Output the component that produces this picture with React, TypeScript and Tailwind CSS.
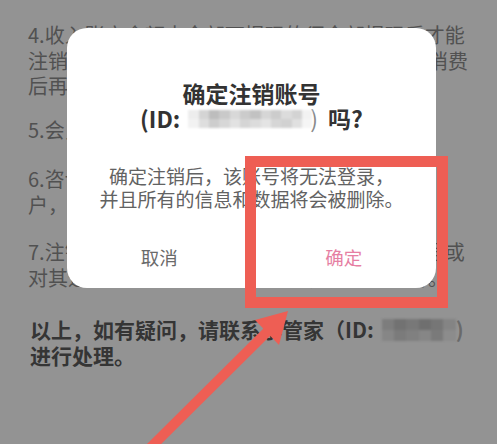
const font = { fontFamily: '"Noto Sans CJK SC", "Noto Sans", sans-serif' };

const titleMosaic = [
  "bg-[#ededed]", "bg-[#d4d4d4]", "bg-[#bdbdbd]", "bg-[#c9c9c9]", "bg-[#d8d8d8]", "bg-[#cbcbcb]",
  "bg-[#c2c2c2]", "bg-[#d6d6d6]", "bg-[#cccccc]", "bg-[#dcdcdc]", "bg-[#d3d3d3]", "bg-[#f2f2f2]",
  "bg-[#f2f2f2]", "bg-[#dedede]", "bg-[#cdcdcd]", "bg-[#d7d7d7]", "bg-[#e2e2e2]", "bg-[#d5d5d5]",
  "bg-[#dcdcdc]", "bg-[#e4e4e4]", "bg-[#d6d6d6]", "bg-[#d1d1d1]", "bg-[#e0e0e0]", "bg-[#f5f5f5]",
];

const idMosaic = [
  "bg-[#7d7d7d]", "bg-[#727272]", "bg-[#787878]", "bg-[#6f6f6f]", "bg-[#767676]", "bg-[#848484]",
  "bg-[#868686]", "bg-[#7b7b7b]", "bg-[#808080]", "bg-[#868686]", "bg-[#7a7a7a]", "bg-[#8c8c8c]",
];

function Mosaic({ cells, cols, className }: { cells: string[]; cols: string; className: string }) {
  return (
    <span className={`inline-grid ${cols} blur-[1px] ${className}`}>
      {cells.map((c, i) => (
        <span key={i} className={c} />
      ))}
    </span>
  );
}

export default function App() {
  return (
    <div className="relative w-[497px] h-[444px] overflow-hidden bg-[#939393]" style={font}>
      {/* page behind the overlay */}
      <div className="pl-[28px] pt-[22px] text-[20px] leading-[25.5px] text-[#515151] whitespace-nowrap">
        <div>
          <p>4.收入账户余额中全部可提现的须全部提现后才能</p>
          <p>注销，若账户内仍有未结算的订单或待处理的消费</p>
          <p>后再申请注销。</p>
        </div>
        <p className="mt-[18px]">5.会员权益将在注销后全部失效。</p>
        <div className="mt-[24px]">
          <p>6.咨询客服时请提供您的账号信息以便核实账</p>
          <p>户，确认无误后即可办理注销。</p>
        </div>
        <div className="mt-[22px]">
          <p>7.注销后，平台将无法为您恢复账户内任何数据或</p>
          <p>对其进行任何形式的找回或补偿，敬请您谅解。</p>
        </div>
        <div className="mt-[27px] text-[21px] font-bold text-[#353535]">
          <p className="flex items-center pl-[2px]">
            以上，如有疑问，请联系小管家（ID:
            <Mosaic cells={idMosaic} cols="grid-cols-6" className="ml-[8px] w-[74px] h-[22px]" />
            <span className="text-[#6a6a6a]">)</span>
          </p>
          <p className="pl-[2px]">进行处理。</p>
        </div>
      </div>

      {/* dialog */}
      <div className="absolute left-[67px] top-[28px] w-[369px] h-[260px] flex flex-col rounded-[20px] bg-white">
        <div className="pt-[53px] text-center text-[23px] leading-[25px] font-bold text-[#333333]">
          <p>确定注销账号</p>
          <p className="flex items-center justify-center">
            <span>(ID:</span>
            <Mosaic cells={titleMosaic} cols="grid-cols-12" className="ml-[8px] w-[124px] h-[18px]" />
            <span className="ml-[-2px] text-[#8a8a8a] font-normal">)</span>
            <span className="ml-[10px]">吗?</span>
          </p>
        </div>
        <div className="mt-[33px] text-center text-[19px] leading-[23px] text-[#626262]">
          <p>确定注销后，该账号将无法登录，</p>
          <p>并且所有的信息和数据将会被删除。</p>
        </div>
        <div className="mt-auto flex h-[60px] text-[18.5px]">
          <button className="flex-1 text-[#6a6a6a]">取消</button>
          <button className="flex-1 text-[#e67fa3]">确定</button>
        </div>
      </div>

      {/* annotation: red frame */}
      <div className="absolute left-[245px] top-[156px] w-[203px] h-[152px] border-[11px] border-[#ee5e54]" />

      {/* annotation: arrow */}
      <svg className="absolute left-0 top-0 pointer-events-none" width="497" height="444" viewBox="0 0 497 444">
        <line x1="146" y1="452" x2="270" y2="329" stroke="#ee5e54" strokeWidth="10" />
        <polygon points="288,311 255,320 279,345" fill="#ee5e54" />
      </svg>
    </div>
  );
}
